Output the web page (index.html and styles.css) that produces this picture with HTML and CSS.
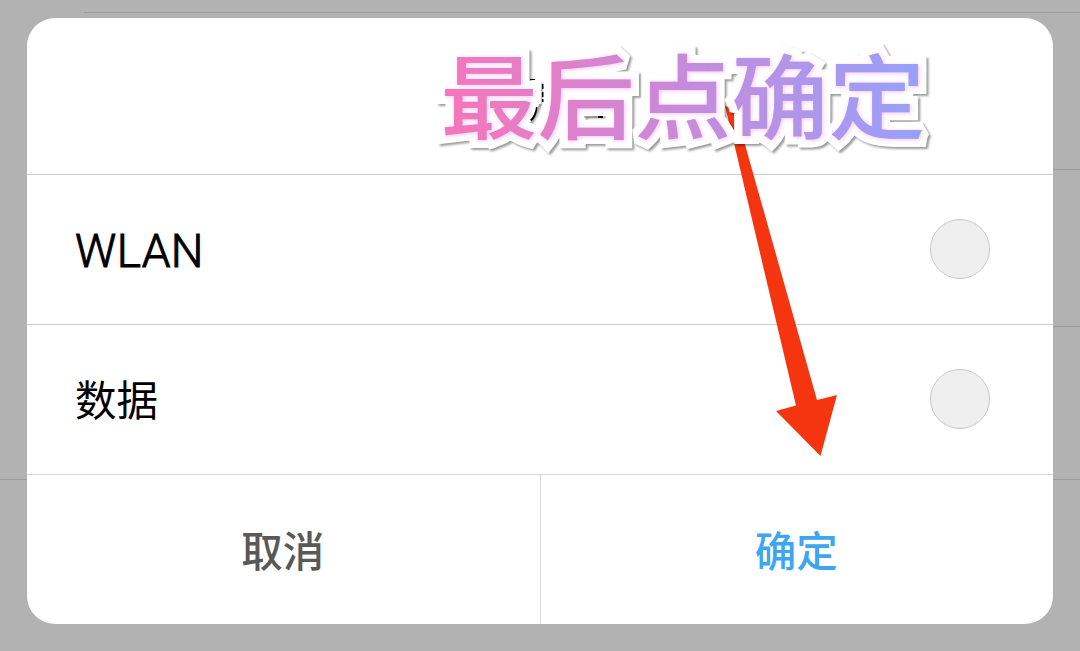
FILE: index.html
```html
<!DOCTYPE html>
<html lang="zh-CN">
<head>
  <meta charset="UTF-8">
  <title>WLAN / 数据</title>
  <link rel="stylesheet" href="styles.css">
</head>
<body>
  <div class="screen">
    <!-- dimmed list behind the dialog -->
    <div class="list">
      <div class="list-row first"></div>
      <div class="list-row"></div>
      <div class="list-row"></div>
      <div class="list-row last"></div>
    </div>

    <div class="dialog">
      <div class="dialog-title"></div>
      <label class="option">
        <span class="latin">WLAN</span>
        <input type="checkbox">
      </label>
      <label class="option">
        <span class="cjk">数据</span>
        <input type="checkbox">
      </label>
      <div class="buttons">
        <button class="cancel">取消</button>
        <button class="confirm">确定</button>
      </div>
    </div>

    <svg class="notes" viewBox="0 0 1080 651">
      <defs>
        <linearGradient id="sticker-fill" gradientUnits="userSpaceOnUse" x1="10" y1="0" x2="475" y2="-60">
          <stop offset="0" stop-color="#f676ba"></stop>
          <stop offset="1" stop-color="#98a0fa"></stop>
        </linearGradient>
      </defs>
      <path class="arrow" d="M725 106 L732 108 L744 141 L817 400 L837 395 L820.500 456 L776 411 L796 405.500 L733.500 141 Z"></path>
      <g transform="translate(440.500 131.500) scale(0.995 0.95)">
        <text class="sticker outline">最后点确定</text>
        <text class="sticker glow">最后点确定</text>
        <text class="sticker fill">最后点确定</text>
      </g>
      <!-- parts of the dialog title left visible -->
      <path class="title-part" d="M530 79h5v1h-5z M542 84h1.500v5h-1.500z M542 92h1.500v5h-1.500z M542 99h1.500v3h-1.500z M536 107l1.500 0q-1 10-6 14l-1.500-1q5-5 6-13z M598 116h5v2h-5z"></path>
      <path class="title-part thin" d="M584 116.500h14v1h-14z"></path>
    </svg>
  </div>
</body>
</html>
```
FILE: styles.css
```css
body {
  margin: 0;
  background-color: #b2b2b2;
  font-family: "Noto Sans CJK SC", sans-serif;
}

.screen {
  position: relative;
  box-sizing: border-box;
  width: 1080px;
  height: 651px;
  padding: 18px 27px 27px;
  overflow: hidden;
}

.list {
  position: absolute;
  top: 0;
  left: 0;
  width: 100%;
}

.list-row {
  box-sizing: border-box;
  height: 157px;
  margin-left: 84px;
  border-bottom: 1px solid #9b9b9b;
}

.list-row.first {
  height: 13px;
}

.list-row.last {
  height: 153px;
  margin-left: 0;
}

.dialog {
  position: relative;
  height: 606px;
  border-radius: 28px;
  background-color: #fff;
  overflow: hidden;
}

.dialog-title {
  height: 156px;
}

.option {
  box-sizing: border-box;
  display: flex;
  align-items: center;
  justify-content: space-between;
  height: 150px;
  padding: 0 63px 1px 48px;
  border-top: 1px solid #cdcdcd;
  font-size: 41.500px;
  color: #000;
}

.latin {
  padding-top: 3px;
  font-family: Roboto, sans-serif;
  font-size: 46px;
  font-weight: 300;
  letter-spacing: 0.4px;
  -webkit-text-stroke: 1px #000;
}

.cjk {
  padding-bottom: 2px;
}

input[type="checkbox"] {
  appearance: none;
  box-sizing: border-box;
  width: 60px;
  height: 60px;
  margin: 0;
  border: 1px solid #c8c8c8;
  border-radius: 50%;
  background-color: #efefef;
}

.buttons {
  display: flex;
  height: 149px;
  border-top: 1px solid #d6d6d6;
}

button {
  flex: 1;
  padding: 0 1px 2px 0;
  border: none;
  background: none;
  font-family: inherit;
  font-size: 41.500px;
  font-weight: 500;
}

.cancel {
  border-right: 1px solid #d6d6d6;
  color: #595959;
}

.confirm {
  color: #3ea6ef;
}

.notes {
  position: absolute;
  top: 0;
  left: 0;
  width: 1080px;
  height: 651px;
}

.arrow {
  fill: #f53410;
}

.sticker {
  font-size: 97.500px;
  font-weight: 500;
}

.outline {
  fill: #fff;
  stroke: #fff;
  stroke-width: 17px;
  stroke-linejoin: miter;
  stroke-miterlimit: 1.8;
  filter: drop-shadow(2px 2px 1px rgba(0, 0, 0, 0.4));
}

.glow {
  fill: #f4c4f4;
  filter: drop-shadow(1px 1px 2px #f4c4f4);
}

.fill {
  fill: url(#sticker-fill);
}

.title-part {
  fill: #000;
}

.thin {
  fill: #777;
}
```
